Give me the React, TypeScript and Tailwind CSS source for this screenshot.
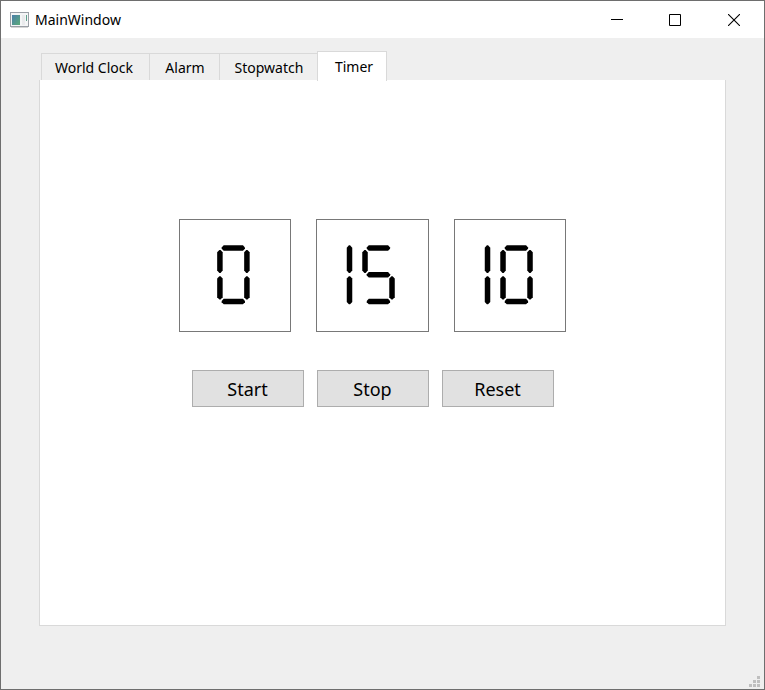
import { useState } from "react";

type Segment = "a" | "b" | "c" | "d" | "e" | "f" | "g";

// Each segment is a bar with blunt pointed ends, drawn in a 33 x 59 cell.
const SEGMENTS: Record<Segment, string> = {
  a: "M4.7 2.2 6.7 0H26L28 2.2V3.4L26 5.5H6.7L4.7 3.4Z",
  b: "M29.3 4.7H30.5L32.7 7V25.2L30.5 27.6H29.3L27.2 25.2V7Z",
  c: "M29.3 31H30.5L32.7 33.3V52L30.5 54.3H29.3L27.2 52V33.3Z",
  d: "M4.7 55.7 6.7 53.5H26L28 55.7V56.9L26 59H6.7L4.7 56.9Z",
  e: "M2.4 31H3.6L5.7 33.3V52L3.6 54.3H2.4L.2 52V33.3Z",
  f: "M2.4 4.7H3.6L5.7 7V25.2L3.6 27.6H2.4L.2 25.2V7Z",
  g: "M4.7 28.9 6.7 26.7H26L28 28.9V30.1L26 32.2H6.7L4.7 30.1Z",
};

const DIGITS: Record<string, Segment[]> = {
  "0": ["a", "b", "c", "d", "e", "f"],
  "2": ["a", "b", "g", "e", "d"],
  "3": ["a", "b", "g", "c", "d"],
  "4": ["f", "g", "b", "c"],
  "5": ["a", "f", "g", "c", "d"],
  "6": ["a", "f", "g", "e", "c", "d"],
  "7": ["a", "b", "c"],
  "8": ["a", "b", "c", "d", "e", "f", "g"],
  "9": ["a", "b", "c", "d", "f", "g"],
};

// The one stands alone, so its two bars run the full height.
const ONE = [
  "M29.3 0H30.5L32.7 2.4V25.2L30.5 27.6H29.3L27.2 25.2V2.4Z",
  "M29.3 31H30.5L32.7 33.3V56.6L30.5 59H29.3L27.2 56.6V33.3Z",
];

function Lcd({ label, value }: { label: string; value: number }) {
  const chars = String(value).split("");
  const first = chars.length === 1 ? 36.8 : 2.4;
  return (
    <div className="border border-[#787878]">
      <svg role="img" aria-label={`${label}: ${value}`} viewBox="0 0 110 111" className="block w-full h-[111px]">
        {chars.map((char, i) => (
          <g key={i} transform={`translate(${first + i * 42.5} 25.3)`}>
            {(char === "1" ? ONE : DIGITS[char].map((s) => SEGMENTS[s])).map((d) => (
              <path key={d} d={d} fill="#000" />
            ))}
          </g>
        ))}
      </svg>
    </div>
  );
}

const TABS = [
  { name: "World Clock", size: "w-[109px] pr-1" },
  { name: "Alarm", size: "w-[71px]" },
  { name: "Stopwatch", size: "w-[99px]" },
  { name: "Timer", size: "w-[70px]" },
];

export default function App() {
  const [active, setActive] = useState("Timer");
  return (
    <div className="min-h-screen flex flex-col border border-[#6e6e6e] bg-[#efefef] text-black font-['Noto_Sans','Open_Sans',sans-serif]">
      <header className="h-[37px] flex items-center bg-white pl-[9px]">
        <svg viewBox="0 0 19 16" className="w-[19px] h-4" aria-hidden="true">
          <defs>
            <linearGradient id="pane" x1="0" y1="0" x2="1" y2="1">
              <stop offset="0" stopColor="#4b7eaa" />
              <stop offset="1" stopColor="#5bab78" />
            </linearGradient>
          </defs>
          <rect x=".5" y=".5" width="18" height="14" fill="#f4f5f6" stroke="#9a9fa6" />
          <path d="M1 15.5H18" stroke="#d5d5d5" />
          <rect x="2" y="3" width="8" height="10" fill="url(#pane)" />
          <path d="M12 3h3v10h-3z" fill="#e9eaec" />
          <path d="M16 3h1v6h-1z" fill="#5ea08c" />
        </svg>
        <h1 className="ml-[6px] text-sm leading-5">MainWindow</h1>
        <div className="ml-auto flex h-full">
          <button type="button" aria-label="Minimize" className="w-[58px] flex items-center justify-center">
            <svg viewBox="0 0 12 12" className="size-3" shapeRendering="crispEdges">
              <path d="M0 5.5H12" stroke="#000" />
            </svg>
          </button>
          <button type="button" aria-label="Maximize" className="w-[58px] flex items-center justify-center">
            <svg viewBox="0 0 12 12" className="size-3">
              <path d="M.5.5h11v11H.5z" fill="none" stroke="#000" />
            </svg>
          </button>
          <button type="button" aria-label="Close" className="w-[60px] flex items-center justify-center">
            <svg viewBox="0 0 12 12" className="size-3">
              <path d="M0 0 12 12M12 0 0 12" stroke="#000" strokeWidth="1.1" />
            </svg>
          </button>
        </div>
      </header>

      <main className="flex-1 flex flex-col px-[38px] pt-[13px]">
        <div role="tablist" className="flex items-end pl-[2px]">
          {TABS.map(({ name, size }) => (
            <button
              key={name}
              type="button"
              role="tab"
              id={`tab-${name}`}
              aria-selected={name === active}
              onClick={() => setActive(name)}
              className={`${size} border-t border-l border-[#d9d9d9] text-sm leading-5 text-center ${
                name === active
                  ? "h-[30px] -mb-px z-10 border-r bg-white pl-1"
                  : "h-[27px] -mr-px pt-px"
              }`}
            >
              {name}
            </button>
          ))}
        </div>
        <section role="tabpanel" aria-label={active} className="flex-1 bg-white border border-t-0 border-[#d9d9d9] pt-[139px] pr-5">
          <div className="mx-auto w-[387px] grid grid-cols-3 gap-[25px]">
            <Lcd label="Hours" value={0} />
            <Lcd label="Minutes" value={15} />
            <Lcd label="Seconds" value={10} />
          </div>
          <div className="mt-[38px] mx-auto w-[362px] grid grid-cols-3 gap-[13px]">
            {["Start", "Stop", "Reset"].map((action) => (
              <button
                key={action}
                type="button"
                className="h-[37px] border border-[#adadad] bg-[#e1e1e1] pt-px text-lg leading-6"
              >
                {action}
              </button>
            ))}
          </div>
        </section>
      </main>

      <footer className="h-[63px] flex items-end justify-end pr-1 pb-[2px]">
        <svg viewBox="0 0 11 11" className="size-[11px]" aria-hidden="true">
          <path
            d="M8 0h3v3H8zM4 4h3v3H4zM8 4h3v3H8zM0 8h3v3H0zM4 8h3v3H4zM8 8h3v3H8z"
            fill="#bfbfbf"
          />
        </svg>
      </footer>
    </div>
  );
}
